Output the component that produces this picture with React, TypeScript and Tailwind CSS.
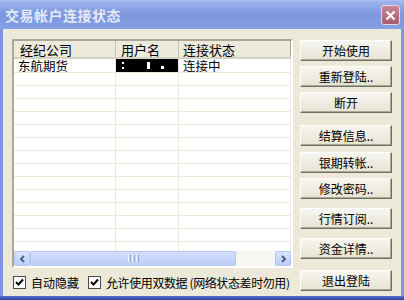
import React from "react";

const rows = Array.from({ length: 15 });

function XpButton({ label, top }: { label: string; top: string }) {
    return (
        <div
            className={`${top} h-[21px] w-[92px] flex items-center justify-center bg-gradient-to-b from-[#f7f6ef] to-[#e6e3d4] border border-t-white border-l-white border-r-[#716f64] border-b-[#716f64] shadow-[inset_-1px_-1px_0_#aca899] text-[12px] text-black leading-none`}
        >
            {label}
        </div>
    );
}

function CheckBox() {
    return (
        <div className="w-[13px] h-[13px] border border-[#4a4a4a] bg-white flex items-center justify-center shrink-0">
            <svg width="9" height="9" viewBox="0 0 9 9">
                <path d="M1 4 L3.5 6.5 L8 1.5" stroke="#000" strokeWidth="2" fill="none" />
            </svg>
        </div>
    );
}

export default function App() {
    return (
        <div
            className="w-[404px] h-[300px] flex flex-col bg-[#7b96de] overflow-hidden"
            style={{ fontFamily: '"Noto Sans CJK SC", "Liberation Sans", sans-serif' }}
        >
            {/* Title bar */}
            <div className="h-[29px] shrink-0 flex items-center justify-between pl-[5px] pr-[4px] bg-gradient-to-b from-[#9db4ec] via-[#7b96de] to-[#86a0e6] border-t border-[#a9bdf0]">
                <span className="text-[14px] font-bold text-[#e4e9f7] leading-none tracking-[0.5px]">交易帐户连接状态</span>
                <div className="w-[19px] h-[20px] rounded-[3px] bg-gradient-to-b from-[#c98596] to-[#a95c6f] border border-[#e9d5dc] flex items-center justify-center">
                    <svg width="11" height="11" viewBox="0 0 11 11">
                        <path d="M1.5 1.5 L9.5 9.5 M9.5 1.5 L1.5 9.5" stroke="#fff" strokeWidth="2.2" />
                    </svg>
                </div>
            </div>

            {/* Body */}
            <div className="flex-1 ml-[3px] mr-[3px] bg-[#ece9d8] flex pt-[10px] pl-[9px]">
                {/* Left column */}
                <div className="w-[281px] shrink-0 flex flex-col">
                    <div className="h-[229px] flex flex-col border-2 border-t-[#aca899] border-l-[#aca899] border-r-white border-b-white bg-white overflow-hidden">
                        {/* Header */}
                        <div className="h-[18px] shrink-0 flex bg-[#ebeadb] border-b-2 border-[#d6d2c2] text-[13px] leading-[15px]">
                            <div className="w-[102px] flex items-center pl-[6px] border-r border-[#c7c5b2]">经纪公司</div>
                            <div className="w-[63px] flex items-center pl-[5px] border-r border-[#c7c5b2]">用户名</div>
                            <div className="w-[112px] flex items-center pl-[4px] border-r border-[#aca899]">连接状态</div>
                            <div className="flex-1"></div>
                        </div>
                        {/* Rows */}
                        <div className="flex-1 overflow-hidden">
                            {rows.map((_, i) => (
                                <div key={i} className={`${i === 0 ? "h-[14px]" : "h-[13px]"} flex border-b border-[#ece9d8] text-[12.5px] leading-[13px]`}>
                                    <div className="w-[102px] border-r border-[#ece9d8] flex items-center pl-[4px] whitespace-nowrap">
                                        {i === 0 ? "东航期货" : ""}
                                    </div>
                                    <div className={`w-[63px] border-r border-[#ece9d8] relative ${i === 0 ? "bg-black" : ""}`}>
                                        {i === 0 && (
                                            <>
                                                <div className="absolute left-[6px] top-[3px] w-[2px] h-[2px] bg-white"></div>
                                                <div className="absolute left-[6px] top-[8px] w-[2px] h-[2px] bg-white"></div>
                                                <div className="absolute left-[31px] top-[3px] w-[3px] h-[7px] bg-white"></div>
                                                <div className="absolute left-[45px] top-[7px] w-[3px] h-[3px] bg-white"></div>
                                            </>
                                        )}
                                    </div>
                                    <div className="w-[112px] border-r border-[#ece9d8] flex items-center pl-[4px] whitespace-nowrap">
                                        {i === 0 ? "连接中" : ""}
                                    </div>
                                </div>
                            ))}
                        </div>
                        {/* Horizontal scrollbar */}
                        <div className="h-[15px] shrink-0 flex bg-[#f7f7f2]">
                            <div className="w-[16px] h-[15px] rounded-[2px] bg-gradient-to-b from-[#dae5fd] to-[#b9cdf9] border border-[#b3c6f2] flex items-center justify-center">
                                <svg width="7" height="8" viewBox="0 0 7 8">
                                    <path d="M5 1 L2 4 L5 7" stroke="#4d6185" strokeWidth="2" fill="none" />
                                </svg>
                            </div>
                            <div className="w-[206px] h-[15px] rounded-[2px] bg-gradient-to-b from-[#d2defc] to-[#bccffa] border border-[#b3c6f2] flex items-center justify-center">
                                <div className="flex gap-[1px]">
                                    <div className="w-[1px] h-[7px] bg-[#eef3fe]"></div>
                                    <div className="w-[1px] h-[7px] bg-[#8ca6e4]"></div>
                                    <div className="w-[1px] h-[7px] bg-[#eef3fe]"></div>
                                    <div className="w-[1px] h-[7px] bg-[#8ca6e4]"></div>
                                    <div className="w-[1px] h-[7px] bg-[#eef3fe]"></div>
                                    <div className="w-[1px] h-[7px] bg-[#8ca6e4]"></div>
                                </div>
                            </div>
                            <div className="flex-1"></div>
                            <div className="w-[16px] h-[15px] rounded-[2px] bg-gradient-to-b from-[#dae5fd] to-[#b9cdf9] border border-[#b3c6f2] flex items-center justify-center">
                                <svg width="7" height="8" viewBox="0 0 7 8">
                                    <path d="M2 1 L5 4 L2 7" stroke="#4d6185" strokeWidth="2" fill="none" />
                                </svg>
                            </div>
                        </div>
                    </div>

                    {/* Checkbox row */}
                    <div className="mt-[8px] flex items-center text-[12px] leading-[13px] text-black whitespace-nowrap">
                        <div className="ml-[1px]"><CheckBox /></div>
                        <span className="ml-[5px] shrink-0">自动隐藏</span>
                        <div className="ml-[9px]"><CheckBox /></div>
                        <span className="ml-[5px] shrink-0 tracking-[-0.4px]">允许使用双数据 (网络状态差时勿用)</span>
                    </div>
                </div>

                {/* Right column buttons */}
                <div className="ml-[7px] flex flex-col">
                    <XpButton label="开始使用" top="mt-[1px]" />
                    <XpButton label="重新登陆.." top="mt-[5px]" />
                    <XpButton label="断开" top="mt-[5px]" />
                    <XpButton label="结算信息.." top="mt-[12px]" />
                    <XpButton label="银期转帐.." top="mt-[6px]" />
                    <XpButton label="修改密码.." top="mt-[5px]" />
                    <XpButton label="行情订阅.." top="mt-[9px]" />
                    <XpButton label="资金详情.." top="mt-[9px]" />
                    <XpButton label="退出登陆" top="mt-[11px]" />
                </div>
            </div>

            {/* Bottom border */}
            <div className="h-[4px] shrink-0 bg-gradient-to-b from-[#5a74d2] to-[#2c3f9c]"></div>
        </div>
    );
}
